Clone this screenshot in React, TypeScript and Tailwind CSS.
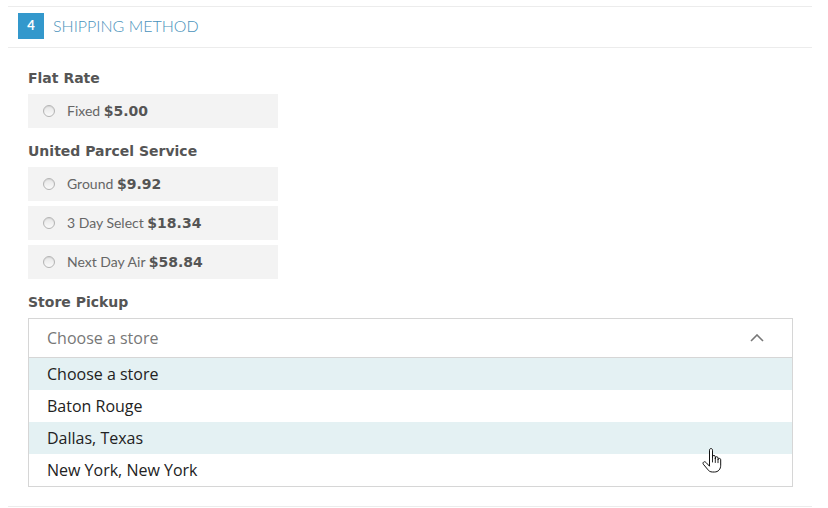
import React from 'react';

type Rate = { label: string; price: string };

const groups: { title: string; rates: Rate[] }[] = [
    { title: 'Flat Rate', rates: [{ label: 'Fixed', price: '$5.00' }] },
    {
        title: 'United Parcel Service',
        rates: [
            { label: 'Ground', price: '$9.92' },
            { label: '3 Day Select', price: '$18.34' },
            { label: 'Next Day Air', price: '$58.84' },
        ],
    },
];

const stores = ['Choose a store', 'Baton Rouge', 'Dallas, Texas', 'New York, New York'];

const Radio: React.FC = () => (
    <span className="inline-block w-[12px] h-[12px] rounded-full border border-[#b4b4b4] bg-gradient-to-b from-[#e6e6e6] to-[#fafafa] shadow-[inset_0_1px_1px_rgba(0,0,0,0.08)]" />
);

const HandCursor: React.FC = () => (
    <svg width="20" height="25" viewBox="0 0 20 25" className="absolute left-[702px] top-[448px]">
        <path
            d="M7.5 2.2c0-1 .7-1.7 1.5-1.7s1.5.7 1.5 1.7V10V8.8c0-.8.6-1.4 1.4-1.4s1.4.6 1.4 1.4V11v-.9c0-.8.6-1.4 1.4-1.4s1.4.6 1.4 1.4v1.6c0-.8.6-1.300 1.3-1.3s1.3.5 1.3 1.3v5.5c0 4-2.4 6.8-6.2 6.8h-2c-2.3 0-3.8-1-5-2.8L1.3 16.2c-.5-.8-.3-1.7.4-2.2.7-.5 1.6-.3 2.2.4l3.6 3.8z"
            fill="#fff"
            stroke="#111"
            strokeWidth="1"
            strokeLinejoin="round"
        />
        <path d="M10.5 10v4M13.3 11v3.5M16 11.7v3" stroke="#111" strokeWidth="0.9" strokeLinecap="round" />
    </svg>
);

export default function App() {
    return (
        <div className="relative w-[828px] h-[508px] bg-white overflow-hidden">
            <div className="ml-2 mr-4 mt-[6px] border-t border-[#ececec]">
                <div className="flex items-center gap-[9px] pl-[10px] pt-[6px] pb-[8px] border-b border-[#ececec]">
                    <span className="w-[26px] h-[26px] flex items-center justify-center bg-[#3398cc] text-white text-[13px] font-bold font-['Lato',sans-serif]">
                        4
                    </span>
                    <span className="text-[16px] text-[#4a92bb] font-['Lato',sans-serif] font-light uppercase">
                        Shipping Method
                    </span>
                </div>

                <div className="pl-5 pt-5 flex flex-col gap-[13px]">
                    {groups.map((g) => (
                        <div key={g.title}>
                            <div className="h-5 leading-5 mb-[6px] text-[14px] font-bold text-[#555] font-['DejaVu_Sans',sans-serif]">
                                {g.title}
                            </div>
                            <div className="flex flex-col gap-[5px]">
                                {g.rates.map((r) => (
                                    <div key={r.label} className="w-[250px] h-[34px] bg-[#f3f3f3] flex items-center pl-[15px] gap-[12px]">
                                        <Radio />
                                        <span className="text-[14px] text-[#666] font-['Lato',sans-serif] -mt-[1px]">
                                            {r.label}{' '}
                                            <span className="font-bold text-[#555] font-['DejaVu_Sans',sans-serif]">{r.price}</span>
                                        </span>
                                    </div>
                                ))}
                            </div>
                        </div>
                    ))}

                    <div>
                        <div className="h-5 leading-5 mb-[6px] text-[14px] font-bold text-[#555] font-['DejaVu_Sans',sans-serif]">
                            Store Pickup
                        </div>
                        <div className="w-[765px] font-['Open_Sans',sans-serif] text-[16px]">
                            <div className="h-[40px] border border-[#d6d6d6] flex items-center justify-between pl-[18px] pr-[28px] text-[#777]">
                                <span>Choose a store</span>
                                <svg width="14" height="8" viewBox="0 0 14 8">
                                    <path d="M1 7l6-6 6 6" fill="none" stroke="#777" strokeWidth="1.6" />
                                </svg>
                            </div>
                            <div className="border-x border-b border-[#d6d6d6]">
                                {stores.map((s, i) => (
                                    <div
                                        key={s}
                                        className={`h-[32px] flex items-center pl-[18px] text-[#222] ${i % 2 === 0 ? 'bg-[#e4f1f3]' : 'bg-white'}`}
                                    >
                                        {s}
                                    </div>
                                ))}
                            </div>
                        </div>
                    </div>
                </div>

                <div className="mt-[19px] border-t border-[#ececec]" />
            </div>
            <HandCursor />
        </div>
    );
}
